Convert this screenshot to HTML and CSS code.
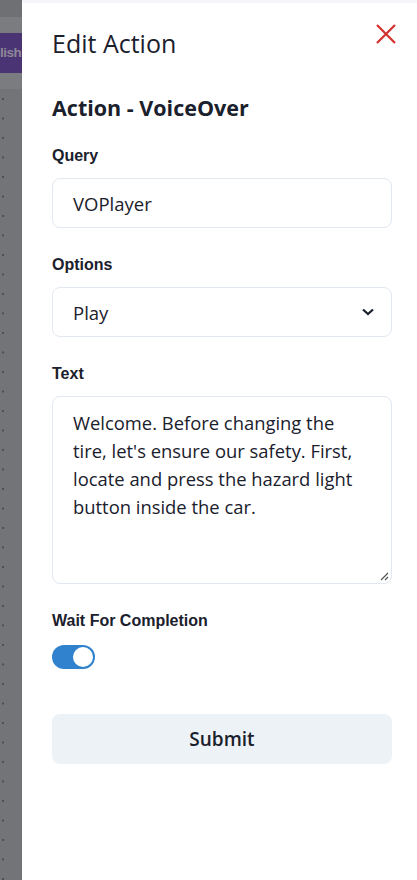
FILE: index.html
```html
<!DOCTYPE html>
<html>
<head>
<meta charset="utf-8">
<link rel="stylesheet" href="styles.css">
</head>
<body>
<div class="page">
  <div class="backdrop">
    <div class="bd-top"></div>
    <div class="bd-band"></div>
    <div class="bd-publish">lish</div>
    <div class="bd-band"></div>
    <div class="bd-grid"></div>
  </div>
  <aside class="drawer">
    <div class="drawer-top"></div>
    <header class="drawer-header">
      <h1 class="title">Edit Action</h1>
      <button class="close" aria-label="Close">
        <svg width="22" height="22" viewBox="0 0 22 22"><path d="M2 2 L20 20 M20 2 L2 20" stroke="#d32f2f" stroke-width="2.2" fill="none"/></svg>
      </button>
    </header>
    <div class="drawer-body">
      <h2 class="subtitle">Action - VoiceOver</h2>
      <div class="field">
        <label class="label">Query</label>
        <div class="input">VOPlayer</div>
      </div>
      <div class="field">
        <label class="label">Options</label>
        <div class="input select">
          <span>Play</span>
          <svg width="14" height="10" viewBox="0 0 14 10"><path d="M2 2.5 L7 7 L12 2.5" stroke="#1a202c" stroke-width="2.2" fill="none"/></svg>
        </div>
      </div>
      <div class="field">
        <label class="label">Text</label>
        <div class="textarea">Welcome. Before changing the tire, let's ensure our safety. First, locate and press the hazard light button inside the car.
          <svg class="grip" width="9" height="9" viewBox="0 0 9 9"><path d="M8 1 L1 8 M8 5 L5 8" stroke="#555" stroke-width="1.2" fill="none"/></svg>
        </div>
      </div>
      <div class="field">
        <label class="label">Wait For Completion</label>
        <div class="switch"><div class="knob"></div></div>
      </div>
      <button class="submit">Submit</button>
    </div>
  </aside>
</div>
</body>
</html>
```
FILE: styles.css
```css
* { box-sizing: border-box; }
html, body { margin: 0; padding: 0; height: 100%; }
body { font-family: "Open Sans", "Noto Sans", sans-serif; color: #1a202c; background: #fff; }
.page { display: flex; height: 880px; overflow: hidden; }
.backdrop { width: 22px; flex: none; display: flex; flex-direction: column; background: #737478; }
.bd-top { height: 17px; background: #6f7074; }
.bd-band { height: 16px; background: #7b7c7f; }
.bd-publish { height: 40px; background: #4a3473; color: #8d8698; font-family: "Liberation Sans", sans-serif; font-weight: bold; font-size: 13.5px; letter-spacing: -0.5px; line-height: 40px; overflow: hidden; white-space: nowrap; }
.bd-grid { flex: 1; background-image: radial-gradient(circle at 2px 2px, #4e4f53 1px, transparent 1.3px); background-size: 20px 19.5px; background-position: 1px 8px; }
.drawer { flex: 1; display: flex; flex-direction: column; background: #fff; }
.drawer-top { height: 3px; background: #f5f6f9; }
.drawer-header { display: flex; justify-content: space-between; align-items: flex-start; padding: 24px 20px 0 30px; }
.title { margin: 0; font-weight: 400; font-size: 25px; line-height: 32px; }
.close { border: 0; background: none; padding: 0; margin-top: -4px; cursor: pointer; }
.drawer-body { padding: 0 25px 0 30px; display: flex; flex-direction: column; }
.subtitle { margin: 35px 0 0; font-size: 21.5px; font-weight: 700; line-height: 28px; }
.field { display: flex; flex-direction: column; margin-top: 28px; }
.subtitle + .field { margin-top: 25px; }
.label { font-family: "Liberation Sans", Arial, sans-serif; font-weight: 700; font-size: 16px; line-height: 18px; margin-bottom: 13px; }
.input { height: 50px; border: 1px solid #e2e8f0; border-radius: 8px; padding: 0 20px; font-size: 18.5px; display: flex; align-items: center; justify-content: space-between; }
.select { padding-right: 16px; }
.textarea { position: relative; height: 188px; border: 1px solid #e2e8f0; border-radius: 8px; padding: 12px 25px 10px 20px; font-size: 18.4px; line-height: 28px; }
.grip { position: absolute; right: 2px; bottom: 2px; }
.switch { margin-top: 2px; width: 43px; height: 24px; border-radius: 12px; background: #3182ce; padding: 2px; display: flex; justify-content: flex-end; }
.knob { width: 20px; height: 20px; border-radius: 50%; background: #fff; }
.submit { margin-top: 45px; height: 50px; border: 0; border-radius: 8px; background: #edf2f7; font-family: inherit; font-size: 19px; font-weight: 600; color: #1a202c; }
```
